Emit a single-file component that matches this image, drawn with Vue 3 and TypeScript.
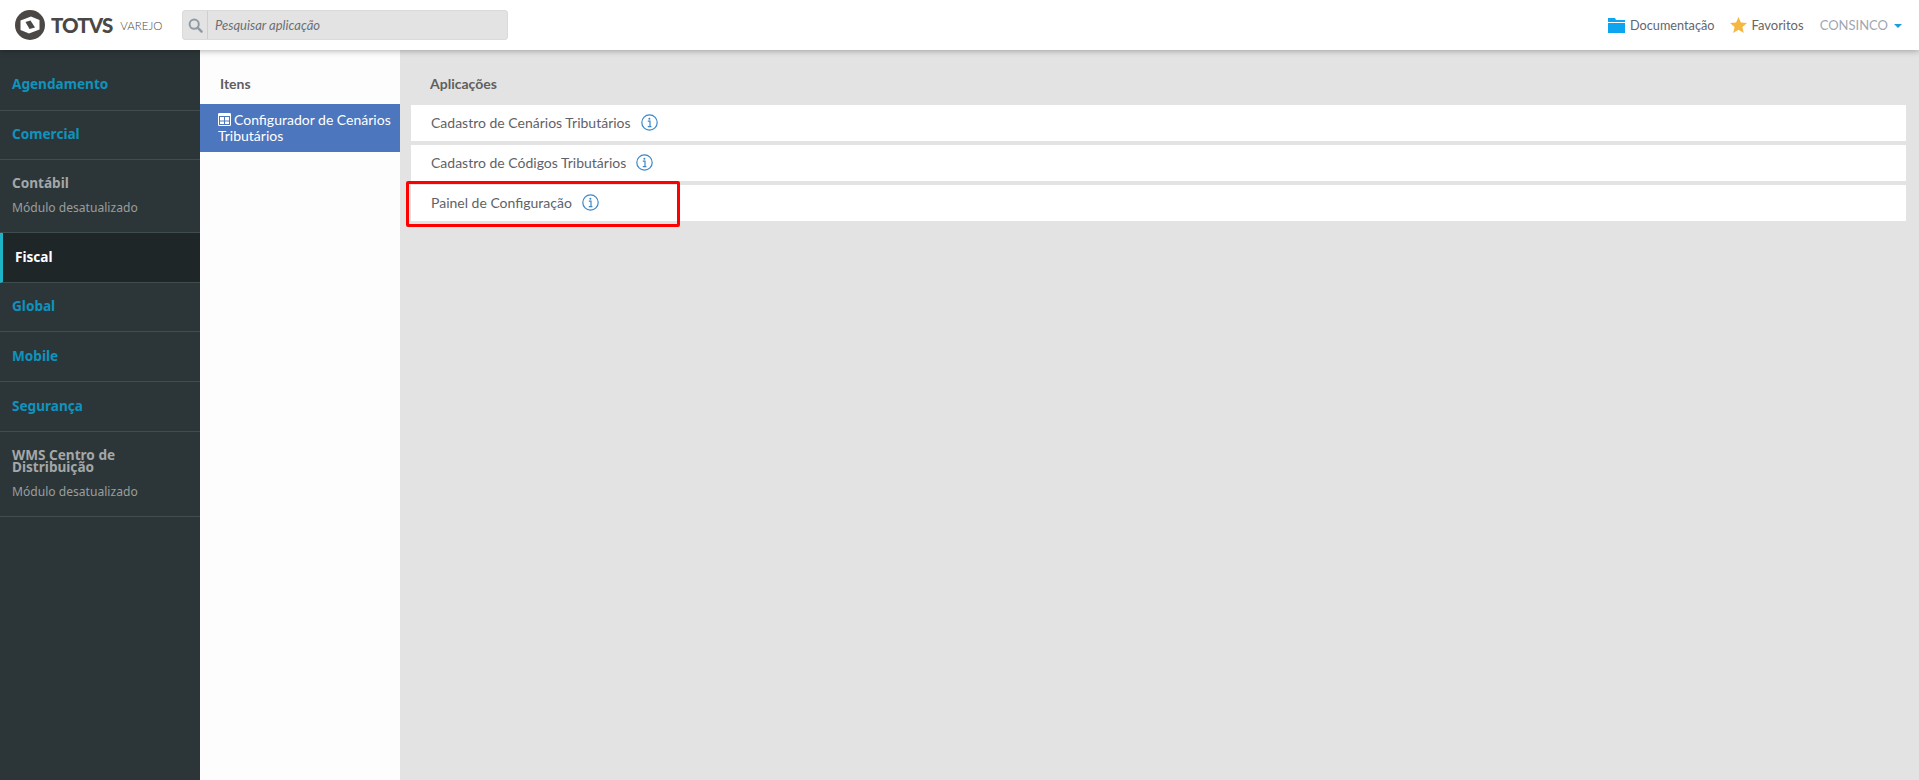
<script setup lang="ts">
interface MenuItem { label: string; state: 'link' | 'off' | 'active'; height: number; note?: string }
const menu: MenuItem[] = [
  { label: 'Agendamento', state: 'link', height: 61 },
  { label: 'Comercial', state: 'link', height: 49 },
  { label: 'Contábil', state: 'off', height: 73, note: 'Módulo desatualizado' },
  { label: 'Fiscal', state: 'active', height: 50 },
  { label: 'Global', state: 'link', height: 49 },
  { label: 'Mobile', state: 'link', height: 50 },
  { label: 'Segurança', state: 'link', height: 50 },
  { label: 'WMS Centro de Distribuição', state: 'off', height: 85, note: 'Módulo desatualizado' },
]
const apps = ['Cadastro de Cenários Tributários', 'Cadastro de Códigos Tributários', 'Painel de Configuração']
</script>

<template>
  <div class="page">
    <header class="top">
      <div class="brand">
        <svg class="logo" width="30" height="30" viewBox="0 0 30 30">
          <circle cx="15" cy="15" r="15" fill="#4a4744" />
          <path d="M5.500 10.500 L16 6.500 L24.500 10 L24.500 19.500 L14 23.500 L5.500 20 Z" fill="#fff" />
          <path d="M10.500 12 L15.500 10.500 L20 17.500 L14.500 19 Z" fill="#4a4744" />
        </svg>
        <span class="totvs">TOTVS</span>
        <span class="varejo">VAREJO</span>
      </div>
      <div class="search">
        <span class="search-ico">
          <svg width="15" height="15" viewBox="0 0 15 15">
            <circle cx="6.200" cy="6.200" r="4.600" fill="none" stroke="#8f9aa5" stroke-width="2" />
            <path d="M9.600 9.600 L13.600 13.600" stroke="#8f9aa5" stroke-width="2.400" stroke-linecap="round" />
          </svg>
        </span>
        <span class="search-text">Pesquisar aplicação</span>
      </div>
      <nav class="actions">
        <svg width="17" height="15" viewBox="0 0 17 15"><path d="M0 0h7l1 2h9v2H0z M0 5h17v10H0z" fill="#0ea5f0" /></svg>
        <span class="doc">Documentação</span>
        <svg class="star" width="17" height="16" viewBox="0 0 17 16"><path d="M8.500 0l2.400 5.600 6.100.5-4.600 4 1.400 5.900-5.300-3.200L3.200 16l1.400-5.900L0 6.100l6.100-.5z" fill="#f5b642" /></svg>
        <span class="fav">Favoritos</span>
        <span class="user">CONSINCO</span>
        <span class="caret"></span>
      </nav>
    </header>

    <div class="body">
      <aside class="side">
        <div
          v-for="m in menu"
          :key="m.label"
          class="entry"
          :class="m.state"
          :style="{ height: m.height + 'px' }"
        >
          <div class="entry-label">{{ m.label }}</div>
          <div v-if="m.note" class="entry-note">{{ m.note }}</div>
        </div>
      </aside>

      <section class="items">
        <h2 class="items-title">Itens</h2>
        <div class="item-on">
          <svg class="table-ico" width="13" height="13" viewBox="0 0 13 13">
            <path fill-rule="evenodd" fill="#fff" d="M0 1.200A1.200 1.200 0 0 1 1.200 0h10.600A1.200 1.200 0 0 1 13 1.200v10.600a1.200 1.200 0 0 1-1.200 1.200H1.200A1.200 1.200 0 0 1 0 11.800z M1 3v8.800a.2.2 0 0 0 .2.2h10.600a.2.2 0 0 0 .2-.2V3z" />
            <path fill="#fff" d="M2 4h4v3.500H2z M7 4h4v3.500H7z M2 8.500h4V11H2z M7 8.500h4V11H7z" />
          </svg>Configurador de Cenários Tributários
        </div>
      </section>

      <main class="apps">
        <h2 class="apps-title">Aplicações</h2>
        <div class="rows">
          <div v-for="a in apps" :key="a" class="row">
            <span>{{ a }}</span>
            <svg class="info" width="17" height="17" viewBox="0 0 17 17">
              <circle cx="8.500" cy="8.500" r="7.700" fill="none" stroke="#3b87c9" stroke-width="1.200" />
              <path d="M6.800 7.200h2.200v5 M6.800 12.700h3.600" fill="none" stroke="#3b87c9" stroke-width="1.200" />
              <circle cx="8.400" cy="4.800" r="1" fill="#3b87c9" />
            </svg>
          </div>
          <div class="mark"></div>
        </div>
      </main>
    </div>
  </div>
</template>

<style>
html, body { margin: 0; overflow: hidden; }
</style>

<style scoped>
.page { width: 1919px; height: 780px; display: flex; flex-direction: column; font-family: Lato, "Liberation Sans", sans-serif; color: #5c5f63; }
.top { height: 50px; flex: none; display: flex; align-items: center; background: #fff; box-shadow: 0 1px 6px rgba(0,0,0,.3); position: relative; z-index: 2; box-sizing: border-box; padding-left: 15px; }
.brand { display: flex; align-items: center; width: 167px; flex: none; }
.logo { flex: none; }
.totvs { font-family: Lato, sans-serif; font-weight: 900; font-size: 20.500px; letter-spacing: -.9px; color: #4a4744; margin-left: 6px; }
.varejo { font-family: Lato, sans-serif; font-weight: 300; font-size: 11.500px; color: #4a4744; margin-left: 8px; }
.search { width: 326px; height: 30px; flex: none; box-sizing: border-box; display: flex; align-items: center; background: #e3e3e3; border: 1px solid #dadada; border-radius: 3px; }
.search-ico { width: 24px; height: 28px; flex: none; display: flex; align-items: center; justify-content: center; border-right: 1px solid #cfcfcf; }
.search-text { font-style: italic; font-size: 13px; color: #6d6f73; margin-left: 7px; }
.actions { margin-left: auto; display: flex; align-items: center; font-size: 13px; padding-right: 17px; }
.doc { margin-left: 5px; color: #5f6670; font-size: 12.700px; }
.star { margin-left: 16px; }
.fav { margin-left: 4px; color: #6a6660; }
.user { margin-left: 16px; color: #a0a6b2; }
.caret { margin-left: 6px; width: 0; height: 0; border-left: 4.500px solid transparent; border-right: 4.500px solid transparent; border-top: 4.500px solid #1d9ddc; margin-top: 2px; }
.body { flex: 1; display: flex; min-height: 0; }
.side { width: 200px; flex: none; background: #2c3638; box-sizing: border-box; }
.entry { box-sizing: border-box; border-bottom: 1px solid #414c4e; padding-left: 12px; display: flex; flex-direction: column; justify-content: center; font-family: "Noto Sans", "Open Sans", sans-serif; }
.entry-label { font-size: 13.600px; font-weight: 700; line-height: 14px; color: #a4a7a8; }
.off .entry-label { line-height: 12px; }
.link, .active { padding-bottom: 2px; }
.link .entry-label { color: #0f93bd; }
.entry.link:first-child { padding-top: 7px; padding-bottom: 0; }
.active { background: #1f2628; border-left: 3px solid #1fb3c8; padding-left: 12px; border-bottom-color: #414c4e; }
.active .entry-label { color: #fff; }
.entry-note { font-size: 12.100px; line-height: 16px; color: #9a9e9f; margin-top: 11px; font-weight: 400; }
.items { width: 200px; flex: none; background: #fdfdfd; }
.items-title { margin: 0; height: 54px; box-sizing: border-box; padding: 26px 0 0 20px; font-size: 14px; line-height: 16px; font-weight: 700; color: #5f5f5f; }
.item-on { width: 200px; height: 48px; box-sizing: border-box; background: #4c76bd; color: #fff; font-size: 14px; line-height: 16px; padding: 8px 5px 0 18px; }
.table-ico { vertical-align: -1px; margin-right: 3px; }
.apps { flex: 1; background: #e3e3e3; padding: 0 13px 0 11px; min-width: 0; }
.apps-title { margin: 0; height: 55px; box-sizing: border-box; padding: 26px 0 0 19px; font-size: 14px; line-height: 16px; font-weight: 700; color: #5f5f5f; }
.rows { display: flex; flex-direction: column; gap: 4px; position: relative; }
.row { height: 36px; box-sizing: border-box; padding: 0 0 1px 20px; background: #fff; display: flex; align-items: center; gap: 10px; font-size: 14px; color: #5f6266; }
.mark { position: absolute; left: -5px; top: 76px; width: 274px; height: 46px; box-sizing: border-box; border: 3px solid #f00; border-radius: 2px; }
</style>
